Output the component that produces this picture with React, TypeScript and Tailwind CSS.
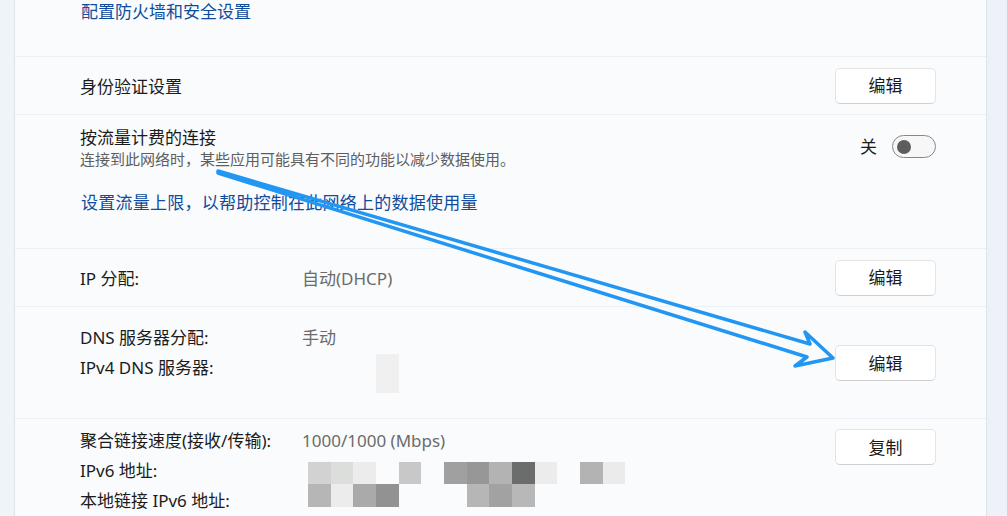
import React from "react";

const PIXEL_ROWS: { h: string; cells: (string | null)[] }[] = [
  {
    h: "h-[22px]",
    cells: [
      "bg-[#d2d2d2]", "bg-[#dcdedc]", "bg-[#ececec]", null, "bg-[#c8c8c9]", null,
      "bg-[#a0a0a0]", "bg-[#979797]", "bg-[#b3b3b3]", "bg-[#6b6d6c]", "bg-[#ececec]", null,
      "bg-[#b3b3b3]", "bg-[#ebebeb]", null,
    ],
  },
  {
    h: "h-[23px]",
    cells: [
      "bg-[#b6b6b6]", "bg-[#ececec]", "bg-[#a9aaa9]", "bg-[#929292]", null, null,
      null, "bg-[#b6b6b6]", "bg-[#a2a2a2]", "bg-[#b8b8b8]", null, null,
      null, null, null,
    ],
  },
];

function ActionButton({ label }: { label: string }) {
  return (
    <button className="w-[101px] h-[36px] rounded-[5px] border border-[#e3e3e3] border-b-[#cfcfcf] bg-white text-[17px] text-[#1b1b1b] leading-none">
      {label}
    </button>
  );
}

function Toggle() {
  return (
    <div className="w-[44px] h-[23px] rounded-full border border-[#878787] bg-[#f7f7f7] flex items-center pl-[4px]">
      <div className="w-[14px] h-[14px] rounded-full bg-[#5d5d5d]" />
    </div>
  );
}

export default function App() {
  return (
    <div className="relative w-[1007px] h-[516px] overflow-hidden flex bg-[#eef3f8] font-['Noto_Sans','Noto_Sans_CJK_SC',sans-serif] text-[17px] text-[#1b1b1b]">
      {/* left gutter */}
      <div className="w-[14px] shrink-0 bg-[#eef4f8]" />

      {/* settings card */}
      <div className="w-[973px] shrink-0 flex flex-col bg-[#f9fbfd] border-x border-[#dde5ec]">
        {/* firewall link */}
        <div className="h-[56px] shrink-0 pl-[66px]">
          <div className="leading-[24px] text-[#0f4c9c]">配置防火墙和安全设置</div>
        </div>

        {/* auth */}
        <div className="h-[58px] shrink-0 border-t border-[#eaf0f5] flex items-center justify-between pl-[65px] pr-[50px]">
          <div className="pt-[3px]">身份验证设置</div>
          <ActionButton label="编辑" />
        </div>

        {/* metered */}
        <div className="h-[134px] shrink-0 border-t border-[#eaf0f5] flex justify-between pl-[65px] pr-[50px]">
          <div className="pt-[12px]">
            <div className="leading-[22px]">按流量计费的连接</div>
            <div className="text-[15px] leading-[20px] text-[#5e5e5e]">
              连接到此网络时，某些应用可能具有不同的功能以减少数据使用。
            </div>
            <div className="mt-[22px] leading-[24px] text-[#0f4c9c] pl-[1px] tracking-[0.25px]">
              设置流量上限，以帮助控制在此网络上的数据使用量
            </div>
          </div>
          <div className="pt-[20px] flex items-start gap-[15px]">
            <span className="leading-[24px]">关</span>
            <Toggle />
          </div>
        </div>

        {/* ip */}
        <div className="h-[58px] shrink-0 border-t border-[#eaf0f5] flex items-center pl-[65px] pr-[50px]">
          <div className="w-[222px] pt-[2px]">IP 分配:</div>
          <div className="flex-1 pt-[2px] text-[#6b6b6b]">自动(DHCP)</div>
          <ActionButton label="编辑" />
        </div>

        {/* dns */}
        <div className="h-[112px] shrink-0 border-t border-[#eaf0f5] flex pl-[65px] pr-[50px]">
          <div className="w-[222px] pt-[16px] leading-[30px]">
            <div>DNS 服务器分配:</div>
            <div>IPv4 DNS 服务器:</div>
          </div>
          <div className="flex-1 pt-[16px] leading-[30px] text-[#6b6b6b]">
            <div>手动</div>
            <div className="ml-[74px] mt-[1px] w-[23px] h-[39px] bg-[#f0f0f0]" />
          </div>
          <div className="pt-[38px]">
            <ActionButton label="编辑" />
          </div>
        </div>

        {/* adapter */}
        <div className="flex-1 border-t border-[#eaf0f5] flex pl-[65px] pr-[50px]">
          <div className="w-[222px] pt-[7px] leading-[30px]">
            <div>聚合链接速度(接收/传输):</div>
            <div>IPv6 地址:</div>
            <div>本地链接 IPv6 地址:</div>
          </div>
          <div className="flex-1 pt-[7px] text-[#6b6b6b]">
            <div className="leading-[30px]">1000/1000 (Mbps)</div>
            <div className="ml-[6px] mt-[6px] w-[340px]">
              {PIXEL_ROWS.map((row, i) => (
                <div key={i} className="grid grid-cols-[repeat(15,minmax(0,1fr))]">
                  {row.cells.map((c, j) => (
                    <div key={j} className={`${row.h} ${c ?? ""}`} />
                  ))}
                </div>
              ))}
            </div>
          </div>
          <div className="pt-[10px]">
            <ActionButton label="复制" />
          </div>
        </div>
      </div>

      {/* right gutter */}
      <div className="flex-1 bg-[#eef2f8]" />

      {/* annotation arrow */}
      <svg className="absolute inset-0 pointer-events-none" width="1007" height="516" viewBox="0 0 1007 516">
        <path
          d="M218 171 L810 344 L805 332 L833 358 L795 366 L807 357 L218 173 Z"
          fill="none"
          stroke="#2196f3"
          strokeWidth="3.5"
          strokeLinejoin="round"
          strokeLinecap="round"
        />
      </svg>
    </div>
  );
}
